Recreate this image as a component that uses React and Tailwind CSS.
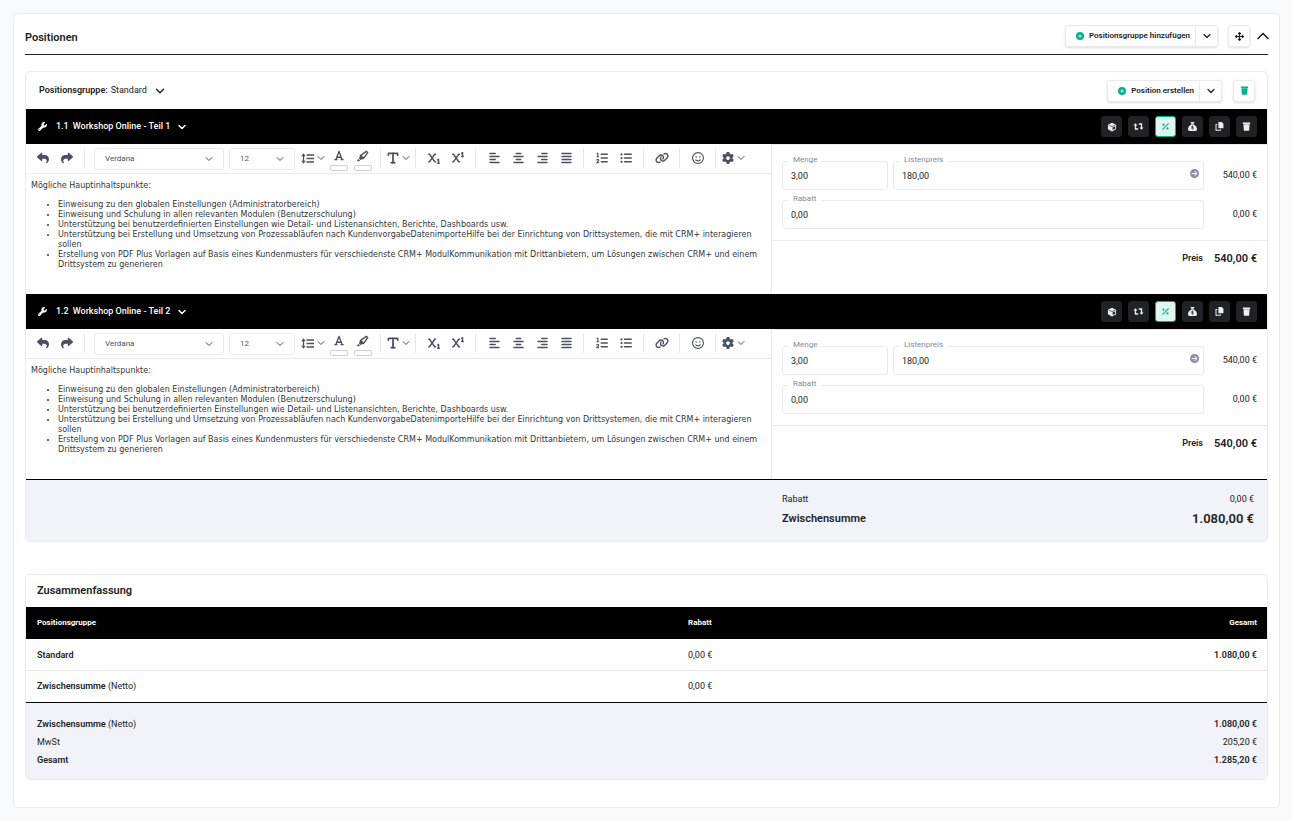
import React, { useState } from 'react';
import {
  FaReply,
  FaShare,
  FaFont,
  FaHighlighter,
  FaSubscript,
  FaSuperscript,
  FaAlignLeft,
  FaAlignCenter,
  FaAlignRight,
  FaAlignJustify,
  FaListOl,
  FaListUl,
  FaLink,
  FaRegFaceSmile,
  FaGear,
  FaSackDollar,
  FaCircleArrowRight,
  FaUpDownLeftRight,
  FaWrench,
  FaCirclePlus,
} from 'react-icons/fa6';
import { ChevronDown, ChevronUp, Type } from 'lucide-react';

const initialPositions = [
  { id: '1.1', title: 'Workshop Online - Teil 1', quantity: '3,00', price: '180,00', discount: '0,00', total: '540,00 €' },
  { id: '1.2', title: 'Workshop Online - Teil 2', quantity: '3,00', price: '180,00', discount: '0,00', total: '540,00 €' },
];

const contentPoints = [
  'Einweisung zu den globalen Einstellungen (Administratorbereich)',
  'Einweisung und Schulung in allen relevanten Modulen (Benutzerschulung)',
  'Unterstützung bei benutzerdefinierten Einstellungen wie Detail- und Listenansichten, Berichte, Dashboards usw.',
  'Unterstützung bei Erstellung und Umsetzung von Prozessabläufen nach KundenvorgabeDatenimporteHilfe bei der Einrichtung von Drittsystemen, die mit CRM+ interagieren sollen',
  'Erstellung von PDF Plus Vorlagen auf Basis eines Kundenmusters für verschiedenste CRM+ ModulKommunikation mit Drittanbietern, um Lösungen zwischen CRM+ und einem Drittsystem zu generieren',
];

function TrashIcon({ className }) {
  return (
    <svg className={className} viewBox="0 0 16 16" fill="currentColor" aria-hidden="true">
      <path d="M1.500 1H14.500v2.500H1.500zM2.500 4.200h11l-.8 10.300a1.200 1.200 0 0 1-1.200 1H4.500a1.200 1.200 0 0 1-1.200-1z" />
    </svg>
  );
}

function BoxIcon() {
  return (
    <svg className="w-[10px] h-[10px]" viewBox="0 0 16 16" aria-hidden="true">
      <path d="M8 1l6.500 3.300v7.400L8 15l-6.500-3.300V4.300z" fill="currentColor" />
      <path d="M3 5l5 2.400L13 5" fill="none" stroke="#212225" strokeWidth="1" />
      <path d="M9 8.600l4-2v4.200l-4 2z" fill="#212225" />
    </svg>
  );
}

function RepeatIcon() {
  return (
    <svg className="w-[11px] h-[9px]" viewBox="0 0 20 16" fill="none" stroke="currentColor" strokeWidth="2.4" aria-hidden="true">
      <path d="M9.500 12.500h-5V4M10.500 3.500h5V12" />
      <path d="M.8 6L4.500 2l3.700 4zM11.800 10l3.700 4 3.700-4z" fill="currentColor" stroke="none" />
    </svg>
  );
}

function PercentIcon() {
  return (
    <svg className="w-[9px] h-[9px]" viewBox="0 0 16 16" aria-hidden="true">
      <path d="M13.500 2.500l-11 11" stroke="currentColor" strokeWidth="2" />
      <circle cx="4.500" cy="4.500" r="2" fill="currentColor" />
      <circle cx="11.500" cy="11.500" r="2" fill="currentColor" />
    </svg>
  );
}

function CopyIcon() {
  return (
    <svg className="w-[9px] h-[9px]" viewBox="0 0 16 16" aria-hidden="true">
      <path d="M6 0h6l3 3v8H6z" fill="currentColor" />
      <path d="M4 4.500H1.800v10h7.700V13" fill="none" stroke="currentColor" strokeWidth="1.800" />
    </svg>
  );
}

function LineHeightIcon() {
  return (
    <svg className="w-[13px] h-[11px] shrink-0" viewBox="0 0 26 22" fill="none" stroke="currentColor" strokeWidth="2.600" aria-hidden="true">
      <path d="M5 4v14M11 4h15M11 11h15M11 18h15" />
      <path d="M0.500 6.500L5 .5l4.500 6zM.5 15.500l4.500 6 4.500-6z" fill="currentColor" stroke="none" />
    </svg>
  );
}

function SplitButton({ label }) {
  return (
    <div className="flex h-[22px] rounded-[3px] border border-[#e9eaee] bg-white shadow-sm">
      <button type="button" className="flex items-center gap-[5px] pl-[10px] pr-[5px] text-[8px] font-semibold">
        <FaCirclePlus className="w-2 h-2 text-[#00b28d]" />
        {label}
      </button>
      <button type="button" aria-label={`${label}: Optionen`} className="flex w-[22px] items-center justify-center border-l border-[#e9eaee]">
        <ChevronDown className="w-3 h-3" strokeWidth={2.5} />
      </button>
    </div>
  );
}

function IconButton({ label, children }) {
  return (
    <button
      type="button"
      aria-label={label}
      className="flex h-[22px] w-[22px] items-center justify-center rounded-[3px] border border-[#e9eaee] bg-white shadow-sm"
    >
      {children}
    </button>
  );
}

function ActionButton({ label, active, children }) {
  return (
    <button
      type="button"
      aria-label={label}
      className={`flex h-[21px] w-[21px] items-center justify-center rounded-[3px] border ${
        active ? 'border-[#00b28d] bg-[#e0f5f0] text-[#00b28d]' : 'border-[#212225] bg-[#212225] text-[#eeeef2]'
      }`}
    >
      {children}
    </button>
  );
}

function ToolButton({ label, children }) {
  return (
    <button type="button" aria-label={label} className="flex h-6 w-6 shrink-0 items-center justify-center pb-px">
      {children}
    </button>
  );
}

function ColorButton({ label, children }) {
  return (
    <button type="button" aria-label={label} className="flex h-6 w-6 shrink-0 flex-col items-center justify-between pt-[3px]">
      {children}
      <span className="h-[6px] w-[18px] rounded-[2px] border border-[#cdced6]"></span>
    </button>
  );
}

function Separator() {
  return <span className="ml-[5px] mr-[6px] h-[19px] w-px shrink-0 bg-[#e4e5ea]"></span>;
}

function ToolSelect({ label, value, wide }) {
  return (
    <div className={`relative shrink-0 ${wide ? 'w-[130px]' : 'w-[66px]'}`}>
      <select
        aria-label={label}
        defaultValue={value}
        className="block h-[22px] w-full appearance-none rounded-[3px] border border-[#e9eaee] bg-white pl-[10px] text-[8px]"
      >
        <option>{value}</option>
      </select>
      <ChevronDown className="pointer-events-none absolute right-[9px] top-[5px] w-3 h-3" strokeWidth={2} />
    </div>
  );
}

function Toolbar() {
  return (
    <div className="flex h-[30px] items-center overflow-hidden border-b border-[#e9eaee] pl-[5px] text-[#4b5062]">
      <ToolButton label="Rückgängig"><FaReply className="w-3 h-3" /></ToolButton>
      <ToolButton label="Wiederholen"><FaShare className="w-3 h-3" /></ToolButton>
      <Separator />
      <div className="ml-[3px] flex gap-[5px]">
        <ToolSelect label="Schriftart" value="Verdana" wide />
        <ToolSelect label="Schriftgröße" value="12" />
      </div>
      <button type="button" aria-label="Zeilenhöhe" className="flex h-6 w-8 shrink-0 items-center justify-end gap-px pb-px">
        <LineHeightIcon />
        <ChevronDown className="w-3 h-3 shrink-0" strokeWidth={2} />
      </button>
      <ColorButton label="Textfarbe"><FaFont className="w-[10px] h-[11px]" /></ColorButton>
      <ColorButton label="Hintergrundfarbe"><FaHighlighter className="w-3 h-3" /></ColorButton>
      <Separator />
      <button type="button" aria-label="Textformat" className="-mx-[2px] flex h-6 w-[27px] shrink-0 items-center justify-center pb-px">
        <Type className="w-[14px] h-[14px] shrink-0" strokeWidth={3} />
        <ChevronDown className="w-3 h-3 shrink-0" strokeWidth={2} />
      </button>
      <Separator />
      <ToolButton label="Tiefgestellt"><FaSubscript className="w-3 h-3" /></ToolButton>
      <ToolButton label="Hochgestellt"><FaSuperscript className="w-3 h-3" /></ToolButton>
      <Separator />
      <ToolButton label="Linksbündig"><FaAlignLeft className="w-[11px] h-3" /></ToolButton>
      <ToolButton label="Zentriert"><FaAlignCenter className="w-[11px] h-3" /></ToolButton>
      <ToolButton label="Rechtsbündig"><FaAlignRight className="w-[11px] h-3" /></ToolButton>
      <ToolButton label="Blocksatz"><FaAlignJustify className="w-[11px] h-3" /></ToolButton>
      <Separator />
      <ToolButton label="Nummerierte Liste"><FaListOl className="w-3 h-3" /></ToolButton>
      <ToolButton label="Aufzählung"><FaListUl className="w-3 h-3" /></ToolButton>
      <Separator />
      <ToolButton label="Link einfügen"><FaLink className="w-[14px] h-3" /></ToolButton>
      <Separator />
      <ToolButton label="Emoji"><FaRegFaceSmile className="w-3 h-3" /></ToolButton>
      <Separator />
      <button type="button" aria-label="Einstellungen" className="flex h-6 shrink-0 items-center gap-px pb-px">
        <FaGear className="w-3 h-3" />
        <ChevronDown className="w-3 h-3" strokeWidth={2} />
      </button>
    </div>
  );
}

function Field({ id, label, value, onChange, className, children }) {
  return (
    <div className={`relative ${className || ''}`}>
      <label htmlFor={id} className="absolute left-[6px] -top-[6px] bg-white px-[5px] text-[8px] leading-[10px] text-[#8589a0]">
        {label}
      </label>
      <input
        id={id}
        value={value}
        onChange={onChange}
        className="block h-[29px] w-full rounded-[3px] border border-[#e9eaee] px-2 text-[9px] outline-none"
      />
      {children}
    </div>
  );
}

function Position({ position }) {
  const [values, setValues] = useState(position);

  const handleChange = (key) => (e) => {
    setValues({ ...values, [key]: e.target.value });
  };

  return (
    <section>
      {/* Title bar */}
      <div className="flex h-[35px] items-center justify-between bg-black pl-3 pr-[10px] text-white">
        <button type="button" className="flex items-center text-[9px] font-medium">
          <FaWrench className="mr-[9px] w-[9px] h-[9px]" />
          <span className="mr-1">{position.id}</span>
          {position.title}
          <ChevronDown className="ml-[6px] w-3 h-3" strokeWidth={3} />
        </button>
        <div className="flex gap-[6px]">
          <ActionButton label="Produkt"><BoxIcon /></ActionButton>
          <ActionButton label="Wiederholung"><RepeatIcon /></ActionButton>
          <ActionButton label="Rabatt" active><PercentIcon /></ActionButton>
          <ActionButton label="Kosten"><FaSackDollar className="w-[9px] h-[9px]" /></ActionButton>
          <ActionButton label="Kopieren"><CopyIcon /></ActionButton>
          <ActionButton label="Löschen"><TrashIcon className="w-[9px] h-[9px]" /></ActionButton>
        </div>
      </div>

      <div className="flex min-h-[150px]">
        {/* Description editor */}
        <div className="min-w-0 flex-1 border-r border-[#e9eaee]">
          <Toolbar />
          <div className="px-[5px] pb-5 pt-[7px] font-['DejaVu_Sans',sans-serif] text-[8px] leading-[10px] text-[#33353d]">
            <p>Mögliche Hauptinhaltspunkte:</p>
            <ul className="mt-[9px] list-disc pl-[27px]">
              {contentPoints.map((point) => (
                <li key={point}>{point}</li>
              ))}
            </ul>
          </div>
        </div>

        {/* Prices */}
        <div className="w-[495px] border-t border-[#e9eaee]">
          <div className="grid grid-cols-[106px_1fr_48px] items-center gap-x-[5px] gap-y-[10px] border-b border-[#e9eaee] px-[10px] pb-[11px] pt-4 text-[9px]">
            <Field id={`menge-${position.id}`} label="Menge" value={values.quantity} onChange={handleChange('quantity')} />
            <Field id={`preis-${position.id}`} label="Listenpreis" value={values.price} onChange={handleChange('price')}>
              <button type="button" aria-label="Preis übernehmen" className="absolute right-[5px] top-2 text-[#8b8fa6]">
                <FaCircleArrowRight className="w-[9px] h-[9px]" />
              </button>
            </Field>
            <span className="pt-px text-right">{position.total}</span>
            <Field
              id={`rabatt-${position.id}`}
              label="Rabatt"
              value={values.discount}
              onChange={handleChange('discount')}
              className="col-span-2"
            />
            <span className="pt-px text-right">0,00 €</span>
          </div>
          <div className="flex items-center justify-end gap-[11px] px-[10px] pt-[10px] font-semibold">
            <span className="text-[9px]">Preis</span>
            <span className="text-[11px] leading-4">{position.total}</span>
          </div>
        </div>
      </div>
    </section>
  );
}

function Summary() {
  return (
    <section className="mt-8 overflow-hidden rounded-[5px] border border-[#e9eaee]">
      <h2 className="flex h-8 items-center px-[11px] text-[11px] font-semibold">Zusammenfassung</h2>
      <table className="w-full table-fixed text-left text-[9px]">
        <thead>
          <tr className="h-8 bg-black text-[8px] text-white">
            <th className="w-[662px] pl-[11px] font-bold">Positionsgruppe</th>
            <th className="font-bold">Rabatt</th>
            <th className="pr-[10px] text-right font-bold">Gesamt</th>
          </tr>
        </thead>
        <tbody>
          <tr className="h-[31px] border-b border-[#e9eaee]">
            <th className="pl-[11px] pt-[2px] font-semibold">Standard</th>
            <td className="pt-[2px]">0,00 €</td>
            <td className="pr-[10px] pt-[2px] text-right font-semibold">1.080,00 €</td>
          </tr>
          <tr className="h-8 border-b border-black">
            <th className="pl-[11px] pt-[2px] font-semibold">
              Zwischensumme <span className="font-normal">(Netto)</span>
            </th>
            <td className="pt-[2px]">0,00 €</td>
            <td></td>
          </tr>
        </tbody>
      </table>
      <dl className="grid grid-cols-[1fr_auto] bg-[#f2f3f8] pb-[10px] pl-[11px] pr-[10px] pt-3 text-[9px] leading-[18px]">
        <dt className="font-semibold">
          Zwischensumme <span className="font-normal">(Netto)</span>
        </dt>
        <dd className="text-right font-semibold">1.080,00 €</dd>
        <dt>MwSt</dt>
        <dd className="text-right">205,20 €</dd>
        <dt className="font-semibold">Gesamt</dt>
        <dd className="text-right font-semibold">1.285,20 €</dd>
      </dl>
    </section>
  );
}

function App() {
  return (
    <div className="min-h-screen bg-[#f9fafc] py-[13px] pl-[13px] pr-3 font-[Roboto,sans-serif] text-[#212225]">
      <main className="rounded-[5px] border border-[#e9eaee] bg-white px-[11px] pb-[27px]">
        {/* Header */}
        <header className="flex h-[41px] items-center justify-between border-b border-[#212225] pt-1">
          <h1 className="pt-1 text-[11px] font-semibold">Positionen</h1>
          <div className="flex items-center">
            <SplitButton label="Positionsgruppe hinzufügen" />
            <div className="ml-[10px] mr-[3px]">
              <IconButton label="Verschieben"><FaUpDownLeftRight className="w-[9px] h-[9px]" /></IconButton>
            </div>
            <button type="button" aria-label="Einklappen" className="-mr-[5px]">
              <ChevronUp className="w-5 h-5" strokeWidth={2} />
            </button>
          </div>
        </header>

        {/* Position group */}
        <section className="mt-4 overflow-hidden rounded-[5px] border border-[#e9eaee]">
          <div className="flex h-[37px] items-center justify-between pl-[13px] pr-3">
            <button type="button" className="flex items-center text-[9px]">
              <span className="mr-[3px] font-semibold">Positionsgruppe:</span>
              Standard
              <ChevronDown className="ml-[6px] w-[14px] h-[14px]" strokeWidth={2.5} />
            </button>
            <div className="flex gap-[11px]">
              <SplitButton label="Position erstellen" />
              <IconButton label="Gruppe löschen">
                <TrashIcon className="w-[9px] h-[9px] text-[#00b28d]" />
              </IconButton>
            </div>
          </div>

          {initialPositions.map((position) => (
            <Position key={position.id} position={position} />
          ))}

          <div className="flex justify-end border-t border-black bg-[#f2f3f8] pb-3 pt-[10px]">
            <dl className="grid w-[495px] grid-cols-[1fr_auto] items-center pl-[10px] pr-[13px]">
              <dt className="text-[9px] leading-[19px]">Rabatt</dt>
              <dd className="text-right text-[9px]">0,00 €</dd>
              <dt className="text-[11px] font-semibold">Zwischensumme</dt>
              <dd className="text-right text-[13px] font-semibold leading-5">1.080,00 €</dd>
            </dl>
          </div>
        </section>

        <Summary />
      </main>
    </div>
  );
}

export default App;
